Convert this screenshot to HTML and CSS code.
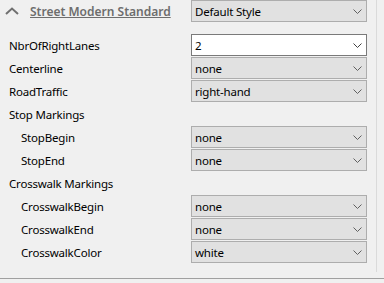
FILE: index.html
```html
<!DOCTYPE html>
<html lang="en">
<head>
    <meta charset="UTF-8">
    <meta name="viewport" content="width=device-width, initial-scale=1.0">
    <title>Street Properties</title>
    <link rel="stylesheet" href="styles.css">
</head>
<body>
    <div class="panel">
        <div class="scroll">
            <div class="grid">
                <div class="head-label">
                    <svg class="collapse" width="14" height="8" viewBox="0 0 14 8"><path d="M1 7 L7 1.5 L13 7" fill="none" stroke="#707070" stroke-width="2"/></svg>
                    <span class="style-name">Street Modern Standard</span>
                </div>
                <div class="combo">Default Style<svg class="arrow" width="9" height="5" viewBox="0 0 9 5"><path d="M0.5 0.5 L4.5 4.5 L8.5 0.5" fill="none" stroke="#606060"/></svg></div>

                <div class="spacer"></div>

                <div class="label">NbrOfRightLanes</div>
                <div class="combo edit">2<svg class="arrow" width="9" height="5" viewBox="0 0 9 5"><path d="M0.5 0.5 L4.5 4.5 L8.5 0.5" fill="none" stroke="#404040"/></svg></div>

                <div class="label">Centerline</div>
                <div class="combo">none<svg class="arrow" width="9" height="5" viewBox="0 0 9 5"><path d="M0.5 0.5 L4.5 4.5 L8.5 0.5" fill="none" stroke="#606060"/></svg></div>

                <div class="label">RoadTraffic</div>
                <div class="combo">right-hand<svg class="arrow" width="9" height="5" viewBox="0 0 9 5"><path d="M0.5 0.5 L4.5 4.5 L8.5 0.5" fill="none" stroke="#606060"/></svg></div>

                <div class="label">Stop Markings</div>
                <div class="empty"></div>

                <div class="label sub">StopBegin</div>
                <div class="combo">none<svg class="arrow" width="9" height="5" viewBox="0 0 9 5"><path d="M0.5 0.5 L4.5 4.5 L8.5 0.5" fill="none" stroke="#606060"/></svg></div>

                <div class="label sub">StopEnd</div>
                <div class="combo">none<svg class="arrow" width="9" height="5" viewBox="0 0 9 5"><path d="M0.5 0.5 L4.5 4.5 L8.5 0.5" fill="none" stroke="#606060"/></svg></div>

                <div class="label">Crosswalk Markings</div>
                <div class="empty"></div>

                <div class="label sub">CrosswalkBegin</div>
                <div class="combo">none<svg class="arrow" width="9" height="5" viewBox="0 0 9 5"><path d="M0.5 0.5 L4.5 4.5 L8.5 0.5" fill="none" stroke="#606060"/></svg></div>

                <div class="label sub">CrosswalkEnd</div>
                <div class="combo">none<svg class="arrow" width="9" height="5" viewBox="0 0 9 5"><path d="M0.5 0.5 L4.5 4.5 L8.5 0.5" fill="none" stroke="#606060"/></svg></div>

                <div class="label sub">CrosswalkColor</div>
                <div class="combo">white<svg class="arrow" width="9" height="5" viewBox="0 0 9 5"><path d="M0.5 0.5 L4.5 4.5 L8.5 0.5" fill="none" stroke="#606060"/></svg></div>
            </div>
        </div>
    </div>
</body>
</html>
```

FILE: styles.css
```css
*{
    margin: 0;
    padding: 0;
    box-sizing: border-box;
}
body{
    background-color: #f0f0f0;
    font-family: "Noto Sans", "Open Sans", sans-serif;
    font-size: 11.5px;
    letter-spacing: -0.2px;
    color: #000;
    width: 384px;
    height: 283px;
    overflow: hidden;
}
.panel{
    width: 384px;
    height: 279px;
    border-bottom: 1px solid #a0a0a0;
}
.scroll{
    width: 377px;
    height: 272px;
    border-right: 1px solid #dadada;
}
.grid{
    display: grid;
    grid-template-columns: 191px 176px;
    row-gap: 1px;
}
/* header with the style selector */
.head-label{
    height: 22px;
    display: flex;
    align-items: center;
    padding-left: 5px;
}
.collapse{
    margin-right: 11px;
}
.style-name{
    font-size: 12px;
    letter-spacing: 0;
    font-weight: 600;
    color: #6d6d6d;
    text-decoration: underline;
}
.spacer{
    grid-column: 1 / 3;
    height: 10px;
}
/* property rows */
.label{
    height: 22px;
    display: flex;
    align-items: center;
    padding-left: 9px;
}
.label.sub{
    padding-left: 21px;
}
.combo{
    height: 22px;
    display: flex;
    align-items: center;
    justify-content: space-between;
    padding: 0 4px 0 3px;
    background-color: #e1e1e1;
    border: 1px solid #adadad;
}
.combo.edit{
    background-color: #fff;
    border-color: #7a7a7a;
}
.arrow{
    flex-shrink: 0;
}
```
